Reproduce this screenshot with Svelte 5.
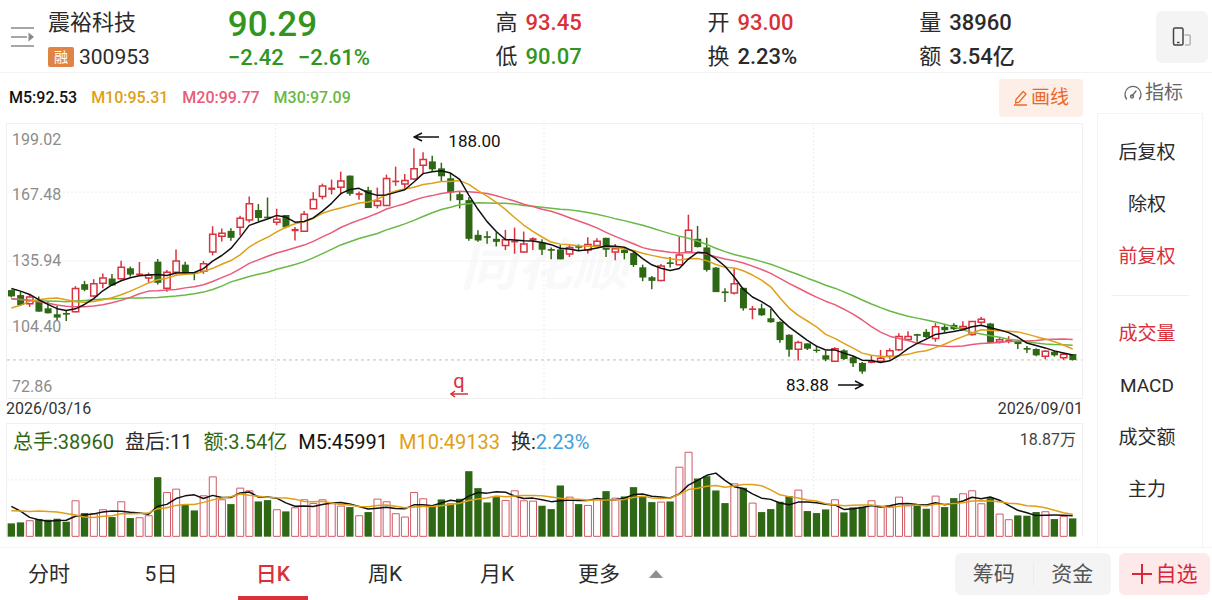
<svelte:options runes />
<script lang="ts">
  type Dir = 'g' | 'r';
  type Candle = [Dir, number, number, number, number];

  const quotes = [
    [{ label: '高', value: '93.45', tone: 'up' }, { label: '低', value: '90.07', tone: 'down' }],
    [{ label: '开', value: '93.00', tone: 'up' }, { label: '换', value: '2.23%', tone: '' }],
    [{ label: '量', value: '38960', tone: '' }, { label: '额', value: '3.54亿', tone: '' }],
  ];
  const averages = [
    { text: 'M5:92.53', cls: 'm5' },
    { text: 'M10:95.31', cls: 'm10' },
    { text: 'M20:99.77', cls: 'm20' },
    { text: 'M30:97.09', cls: 'm30' },
  ];
  const adjustModes = ['后复权', '除权', '前复权'];
  const indicators = ['成交量', 'MACD', '成交额', '主力'];
  const periods = ['分时', '5日', '日K', '周K', '月K'];

  let adjust = $state('前复权');
  let indicator = $state('成交量');
  let period = $state('日K');

  // direction, high, body top, body bottom, low; larger is lower on the plot
  const candles: Candle[] = [
    ['g', 508, 510, 527, 531], ['g', 514, 525, 553, 556], ['r', 522, 530, 550, 560], ['g', 528, 546, 573, 574],
    ['g', 543, 565, 578, 580], ['g', 556, 583, 591, 602], ['g', 570, 579, 582, 602], ['r', 497, 504, 574, 576],
    ['g', 481, 492, 507, 512], ['r', 476, 490, 527, 529], ['r', 459, 472, 488, 503], ['g', 460, 475, 494, 496],
    ['r', 420, 440, 475, 477], ['g', 438, 444, 461, 468], ['r', 424, 460, 463, 464], ['r', 456, 463, 472, 486],
    ['g', 415, 424, 486, 492], ['r', 448, 455, 503, 514], ['r', 386, 421, 455, 462], ['g', 423, 433, 457, 458],
    ['g', 455, 457, 459, 479], ['r', 421, 429, 452, 460], ['r', 316, 340, 394, 404], ['r', 323, 337, 346, 362],
    ['g', 322, 331, 350, 360], ['r', 284, 292, 319, 344], ['r', 226, 248, 297, 305], ['g', 249, 268, 290, 302],
    ['g', 229, 288, 291, 292], ['r', 263, 295, 304, 313], ['g', 283, 283, 318, 322], ['r', 318, 325, 330, 359],
    ['r', 270, 280, 331, 333], ['r', 213, 235, 263, 264], ['r', 187, 194, 226, 235], ['r', 175, 200, 205, 220],
    ['r', 151, 179, 198, 220], ['g', 163, 164, 217, 224], ['r', 211, 217, 221, 236], ['g', 197, 208, 260, 261],
    ['r', 199, 240, 253, 262], ['r', 160, 172, 253, 255], ['r', 136, 179, 182, 194], ['r', 158, 178, 188, 205],
    ['r', 80, 142, 173, 175], ['r', 92, 114, 132, 156], ['g', 103, 121, 143, 152], ['g', 124, 142, 164, 182],
    ['g', 155, 172, 213, 239], ['g', 212, 220, 236, 262], ['g', 228, 238, 353, 360], ['g', 328, 343, 358, 363],
    ['g', 331, 347, 350, 369], ['g', 334, 355, 362, 377], ['r', 327, 357, 374, 388], ['r', 320, 360, 364, 399],
    ['r', 332, 370, 394, 395], ['r', 349, 353, 358, 388], ['g', 355, 366, 386, 403], ['g', 380, 386, 389, 416],
    ['g', 372, 387, 415, 416], ['r', 373, 380, 400, 409], ['g', 371, 377, 380, 388], ['r', 349, 371, 388, 398],
    ['r', 352, 361, 374, 376], ['g', 351, 352, 386, 409], ['r', 370, 384, 394, 419], ['g', 380, 388, 396, 416],
    ['g', 390, 398, 432, 439], ['g', 432, 441, 470, 482], ['g', 466, 471, 480, 506], ['r', 430, 436, 480, 482],
    ['g', 409, 426, 429, 441], ['r', 346, 403, 432, 434], ['r', 281, 328, 394, 395], ['g', 315, 355, 378, 380],
    ['g', 351, 381, 447, 453], ['g', 439, 442, 514, 515], ['g', 503, 514, 517, 545], ['r', 443, 490, 518, 522],
    ['g', 502, 503, 563, 571], ['r', 557, 565, 568, 597], ['g', 550, 565, 584, 587], ['g', 566, 595, 605, 608],
    ['g', 603, 606, 659, 668], ['g', 642, 645, 688, 710], ['r', 662, 667, 688, 722], ['g', 670, 671, 685, 690],
    ['g', 677, 690, 692, 698], ['g', 693, 707, 718, 724], ['r', 682, 686, 724, 726], ['g', 688, 692, 716, 720],
    ['g', 708, 713, 729, 741], ['g', 726, 730, 754, 762], ['r', 705, 723, 728, 730], ['r', 690, 715, 724, 728],
    ['r', 685, 692, 709, 718], ['r', 639, 649, 689, 693], ['r', 633, 649, 658, 662], ['g', 641, 643, 646, 665],
    ['g', 627, 636, 650, 655], ['r', 609, 620, 655, 665], ['g', 611, 621, 629, 637], ['g', 609, 615, 626, 630],
    ['r', 603, 619, 625, 630], ['r', 602, 604, 643, 647], ['r', 590, 597, 606, 613], ['g', 608, 611, 667, 668],
    ['r', 652, 659, 666, 670], ['r', 648, 660, 663, 670], ['g', 661, 664, 671, 687], ['g', 678, 685, 688, 699],
    ['g', 685, 688, 705, 709], ['r', 691, 694, 709, 718], ['g', 692, 696, 705, 710], ['r', 699, 703, 713, 720],
    ['g', 702, 703, 719, 722],
  ];

  // top edge of each volume bar
  const volumes = [
    310, 307, 301, 297, 299, 296, 305, 241, 279, 281, 268, 291, 244, 294, 292, 286, 171, 216, 206, 252,
    271, 226, 169, 238, 252, 203, 211, 244, 240, 268, 274, 262, 238, 249, 238, 250, 257, 261, 286, 276,
    236, 244, 280, 290, 216, 235, 258, 238, 250, 236, 153, 204, 247, 231, 240, 211, 241, 242, 257, 267,
    196, 230, 252, 255, 236, 213, 233, 229, 201, 228, 246, 245, 244, 140, 95, 175, 168, 211, 249, 190,
    203, 248, 276, 267, 245, 228, 209, 273, 279, 268, 238, 277, 262, 260, 241, 259, 259, 230, 256, 256,
    266, 227, 261, 234, 220, 211, 250, 234, 281, 298, 286, 287, 276, 274, 297, 288, 295,
  ];

  const closes = candles.map(([dir, , top, bottom]) => (dir === 'r' ? top : bottom));
  const cx = (i: number) => 13 + i * 27.5;

  // lead holds the averages whose window starts before the first bar shown
  function average(values: number[], n: number, lead: number[]) {
    return values
      .map((_, i) => {
        const y = i < n - 1 ? lead[i] : values.slice(i - n + 1, i + 1).reduce((a, b) => a + b, 0) / n;
        return `${cx(i)},${y.toFixed(1)}`;
      })
      .join(' ');
  }

  const priceLines = [
    { cls: 'm30', points: average(closes, 30, [535, 537, 539, 541, 542, 543, 544, 542, 540, 538, 536, 535, 534, 533, 533, 532, 531, 529, 527, 524, 520, 515, 507, 497, 484, 476, 468, 461, 455]) },
    { cls: 'm20', points: average(closes, 20, [535, 537, 540, 544, 549, 554, 558, 559, 559, 557, 553, 547, 540, 531, 520, 512, 511, 509, 507]) },
    { cls: 'm10', points: average(closes, 10, [563, 555, 543, 538, 534, 533, 538, 544, 546]) },
    { cls: 'm5', points: average(closes, 5, [504, 512, 522, 538]) },
  ];
  const volumeLines = [
    { cls: 'm5', points: average(volumes, 5, [258, 272, 291, 298]) },
    { cls: 'm10', points: average(volumes, 10, [271, 272, 273, 272, 273, 275, 279, 284, 290]) },
  ];

  const axis = [
    { text: '199.02', top: 6 },
    { text: '167.48', top: 26 },
    { text: '135.94', top: 50 },
    { text: '104.40', top: 74 },
    { text: '72.86', top: 96 },
  ];
</script>

<div class="app">
  <header class="quote">
    <button class="menu" aria-label="自选列表">
      <svg viewBox="0 0 24 20" width="24" height="20" fill="none" stroke="#8a8a8a" stroke-width="1.5" aria-hidden="true">
        <path d="M0 1h23M0 10h16M0 19h23" />
        <path d="M17.5 5.5v9l5.5-4.5z" fill="#8a8a8a" stroke="none" />
      </svg>
    </button>
    <div class="stock">
      <h1>震裕科技</h1>
      <div class="code"><span class="tag">融</span>300953</div>
    </div>
    <div class="price down">
      <strong>90.29</strong>
      <div class="change"><span>−2.42</span><span>−2.61%</span></div>
    </div>
    {#each quotes as pair}
      <dl>
        {#each pair as q}
          <div><dt>{q.label}</dt><dd class={q.tone}>{q.value}</dd></div>
        {/each}
      </dl>
    {/each}
    <button class="rotate" aria-label="切换竖屏">
      <svg viewBox="0 0 20 20" width="20" height="20" fill="none" stroke-width="1.5" aria-hidden="true">
        <path d="M12.5 8h4.500q1.200 0 1.200 1.200v7.600q0 1.200-1.200 1.200h-4" stroke="#b5b5b5" />
        <rect x="1.5" y="1" width="9.5" height="17" rx="1.5" stroke="#444" />
        <path d="M5 15.5h2.5" stroke="#444" />
      </svg>
    </button>
  </header>

  <main>
    <section class="charts">
      <div class="averages">
        {#each averages as a}
          <span class={a.cls}>{a.text}</span>
        {/each}
        <button class="draw">
          <svg viewBox="0 0 16 16" width="16" height="16" fill="none" stroke="currentColor" stroke-width="1.3" stroke-linejoin="round" aria-hidden="true">
            <path d="M3 9.5 10.2 1.5 13 4 6 12.2 2.5 13zM1 15h13" />
          </svg>
          画线
        </button>
      </div>

      <div class="plot">
        <span class="watermark" aria-hidden="true">同花顺</span>
        <svg class="canvas" viewBox="0 7 3231 828" preserveAspectRatio="none" aria-label="日K线图">
          <path class="grid" d="M0 421H3231M0 629H3231" />
          <path class="grid dotted" d="M0 213H3231M807 7V835M1614 7V835M2424 7V835" />
          <path class="last" d="M0 720H3231" />
          {#each candles as [dir, high, top, bottom, low], i}
            <line class={dir} x1={cx(i)} x2={cx(i)} y1={high} y2={low} />
            {#if dir === 'r' && bottom - top > 5}
              <rect class="r" x={cx(i) - 9} y={top} width="19" height={bottom - top} />
            {:else}
              <rect class="solid {dir}" x={cx(i) - 10} y={top - 1} width="21" height={bottom - top + 2} />
            {/if}
          {/each}
          {#each priceLines as line}
            <polyline class={line.cls} points={line.points} />
          {/each}
        </svg>
        {#each axis as a}
          <span class="axis" style="top: {a.top}%">{a.text}</span>
        {/each}
        <span class="peak">
          <svg viewBox="0 0 26 12" width="26" height="12" aria-hidden="true"><path d="M9 2 1 6l8 4M1 6h25" /></svg>
          188.00
        </span>
        <span class="trough">
          83.88
          <svg viewBox="0 0 26 12" width="26" height="12" aria-hidden="true"><path d="m17 2 8 4-8 4M25 6H0" /></svg>
        </span>
        <span class="event">
          q
          <svg viewBox="0 0 18 8" width="18" height="8" aria-hidden="true"><path d="M5 1 1 4l4 3M1 4h17" /></svg>
        </span>
      </div>

      <div class="dates"><time>2026/03/16</time><time>2026/09/01</time></div>

      <div class="volume">
        <svg class="canvas" viewBox="0 10 3231 340" preserveAspectRatio="none" aria-label="成交量图">
          <path class="grid dotted" d="M0 178H3231M807 10V350M1614 10V350M2424 10V350" />
          {#each volumes as top, i}
            {#if candles[i][0] === 'r'}
              <rect class="r thin" x={cx(i) - 10} y={top} width="21" height={348 - top} />
            {:else}
              <rect class="solid g" x={cx(i) - 11} y={top - 1} width="22" height={350 - top} />
            {/if}
          {/each}
          {#each volumeLines as line}
            <polyline class={line.cls} points={line.points} />
          {/each}
        </svg>
        <div class="legend">
          <span class="dark-green">总手:38960</span>
          <span>盘后:11</span>
          <span class="dark-green">额:3.54亿</span>
          <span class="m5">M5:45991</span>
          <span class="m10">M10:49133</span>
          <span>换:<span class="blue">2.23%</span></span>
          <span class="max">18.87万</span>
        </div>
      </div>
    </section>

    <aside>
      <button class="gauge">
        <svg viewBox="0 0 20 16" width="20" height="16" fill="none" stroke="currentColor" stroke-width="1.3" stroke-linecap="round" aria-hidden="true">
          <path d="M3.5 14A8 8 0 1 1 16.5 14M9 11l4-5" />
          <circle cx="9" cy="11.5" r="1.500" />
        </svg>
        指标
      </button>
      <div class="options">
        {#each adjustModes as mode}
          <button class:active={adjust === mode} aria-pressed={adjust === mode} onclick={() => (adjust = mode)}>{mode}</button>
        {/each}
        <hr />
        {#each indicators as name}
          <button class:active={indicator === name} aria-pressed={indicator === name} onclick={() => (indicator = name)}>{name}</button>
        {/each}
      </div>
    </aside>
  </main>

  <footer>
    <nav>
      {#each periods as p}
        <button class:active={period === p} aria-pressed={period === p} onclick={() => (period = p)}>{p}</button>
      {/each}
      <button class="more">
        更多
        <svg viewBox="0 0 14 8" width="14" height="8" aria-hidden="true"><path d="M0 8 7 0l7 8z" fill="#8f8f8f" /></svg>
      </button>
    </nav>
    <div class="group">
      <button>筹码</button>
      <button>资金</button>
    </div>
    <button class="add">
      <svg viewBox="0 0 20 20" width="20" height="20" stroke="currentColor" stroke-width="2" aria-hidden="true"><path d="M10 0v20M0 10h20" /></svg>
      自选
    </button>
  </footer>
</div>

<style>
  :global(body) {
    background: #fff;
  }
  .app {
    display: flex;
    flex-direction: column;
    min-height: 100vh;
    color: #2b2b2b;
    font-family: Roboto, 'Noto Sans CJK SC', sans-serif;
    font-size: 20px;
    line-height: 24px;
  }
  button {
    padding: 0;
    border: none;
    background: none;
    color: inherit;
    font: inherit;
    white-space: nowrap;
    cursor: pointer;
  }
  h1,
  dl,
  dd {
    margin: 0;
    font-weight: 400;
  }
  svg {
    flex-shrink: 0;
  }
  .up {
    color: #d9303a;
  }
  .down {
    color: #32961e;
  }

  .quote {
    display: grid;
    grid-template-columns: 48px 180fr 268fr 212fr 212fr 237fr 52px;
    align-items: center;
    height: 72px;
    padding-right: 4px;
    border-bottom: 1px solid #f3f3f3;
  }
  .menu {
    display: flex;
    padding-left: 11px;
  }
  .stock,
  dl {
    display: flex;
    flex-direction: column;
    gap: 10px;
    padding-top: 5px;
  }
  h1 {
    font-size: 22px;
    line-height: 24px;
  }
  .code {
    display: flex;
    align-items: center;
    gap: 5px;
    font-size: 21px;
  }
  .tag {
    width: 26px;
    border-radius: 2px;
    background: #e08443;
    color: #fff;
    font-size: 14px;
    line-height: 20px;
    text-align: center;
  }
  .price {
    padding-top: 8px;
  }
  .price strong {
    display: block;
    font-size: 35px;
    font-weight: 500;
    line-height: 34px;
  }
  .change {
    display: flex;
    gap: 14px;
    font-size: 22px;
    font-weight: 500;
    line-height: 32px;
  }
  dl div {
    display: flex;
    gap: 8px;
    font-size: 22px;
  }
  dd {
    font-weight: 500;
  }
  .rotate {
    display: grid;
    place-items: center;
    height: 52px;
    border-radius: 6px;
    background: #f4f4f4;
  }

  main {
    display: flex;
    flex: 1;
  }
  .charts {
    display: flex;
    flex: 1;
    flex-direction: column;
    min-width: 0;
    padding: 0 14px 10px 6px;
  }
  .averages {
    display: flex;
    align-items: center;
    gap: 14px;
    height: 50px;
    padding-left: 3px;
    font-size: 16px;
    font-weight: 500;
  }
  .draw {
    display: flex;
    align-items: center;
    justify-content: center;
    gap: 2px;
    width: 84px;
    height: 38px;
    margin-left: auto;
    border-radius: 4px;
    background: #fdeee7;
    color: #e8692a;
    font-size: 19px;
    font-weight: 400;
  }
  .m5 {
    color: #111;
    stroke: #111;
  }
  .m10 {
    color: #dfa016;
    stroke: #dfa016;
  }
  .m20 {
    color: #e95b78;
    stroke: #e95b78;
  }
  .m30 {
    color: #68b945;
    stroke: #68b945;
  }

  .plot,
  .volume {
    position: relative;
    box-sizing: border-box;
    border: 1px solid #f0f0f0;
  }
  .plot {
    flex: 1;
    min-height: 240px;
  }
  .canvas {
    position: absolute;
    inset: 0;
    width: 100%;
    height: 100%;
  }
  .canvas * {
    vector-effect: non-scaling-stroke;
  }
  .grid {
    stroke: #f3f3f3;
  }
  .dotted {
    stroke: #ededed;
    stroke-dasharray: 2 2;
  }
  .last {
    stroke: #c9bd98;
    stroke-dasharray: 3 3;
  }
  polyline {
    fill: none;
    stroke-width: 1.5;
    stroke-linejoin: round;
  }
  line {
    stroke-width: 1.5;
  }
  .g {
    fill: #2f6815;
    stroke: #2f6815;
  }
  .r {
    fill: #fff;
    stroke: #d8333f;
    stroke-width: 1.5;
  }
  .thin {
    stroke: #cf5a66;
    stroke-width: 1;
  }
  .solid {
    stroke: none;
  }
  .solid.r {
    fill: #d8333f;
  }
  .watermark {
    position: absolute;
    top: 52%;
    left: 50%;
    transform: translate(-50%, -50%);
    color: #f9f9f9;
    font-size: 56px;
    font-style: italic;
    font-weight: 700;
    line-height: 56px;
  }
  .axis {
    position: absolute;
    left: 5px;
    transform: translateY(-50%);
    color: #8c8c8c;
    font-size: 16px;
  }
  .peak,
  .trough,
  .event {
    position: absolute;
    display: flex;
    align-items: center;
    color: #111;
    font-size: 17px;
  }
  .peak svg,
  .trough svg,
  .event svg {
    fill: none;
    stroke: currentColor;
    stroke-width: 1.5;
  }
  .peak {
    top: 2%;
    left: 37.8%;
    gap: 9px;
  }
  .peak svg {
    margin-bottom: 8px;
  }
  .trough {
    top: 91%;
    right: 20.3%;
    gap: 9px;
  }
  .event {
    bottom: 0;
    left: 41.2%;
    flex-direction: column;
    color: #d9303a;
    font-size: 20px;
    line-height: 18px;
  }
  .dates {
    display: flex;
    justify-content: space-between;
    height: 24px;
    color: #333;
    font-size: 16px;
    line-height: 20px;
  }
  .volume {
    height: 114px;
    border-bottom: none;
  }
  .legend {
    position: relative;
    display: flex;
    gap: 11px;
    padding: 6px 6px 0;
    white-space: nowrap;
  }
  .legend span {
    stroke: none;
  }
  .legend .max {
    margin-left: auto;
    color: #444;
    font-size: 16px;
    line-height: 20px;
  }
  .dark-green {
    color: #2f6815;
  }
  .blue {
    color: #42a0dc;
  }

  aside {
    display: flex;
    flex-direction: column;
    width: 106px;
    margin-right: 9px;
    font-size: 19px;
  }
  .gauge {
    display: flex;
    align-items: center;
    justify-content: center;
    height: 40px;
    padding-left: 6px;
    gap: 2px;
    color: #666;
  }
  .options {
    display: flex;
    flex: 1;
    flex-direction: column;
    padding-top: 13px;
    border: 1px solid #f3f3f3;
    border-bottom: none;
  }
  .options button {
    height: 52px;
    padding-right: 6px;
  }
  .options hr {
    width: 78px;
    margin: 12px auto;
    border: none;
    border-top: 1px solid #f0f0f0;
  }
  .active {
    color: #d9303a;
  }

  footer {
    display: flex;
    align-items: center;
    height: 52px;
    padding-right: 2px;
    border-top: 1px solid #f3f3f3;
    font-size: 21px;
  }
  nav {
    display: flex;
    flex: 1;
    align-self: stretch;
    gap: 42px;
    padding-left: 14px;
  }
  nav button {
    min-width: 70px;
    padding-top: 4px;
    border-bottom: 4px solid transparent;
  }
  nav .active {
    border-color: #d9303a;
    font-weight: 500;
  }
  nav .more {
    display: flex;
    align-items: center;
    gap: 29px;
    padding-left: 4px;
  }
  .group {
    display: flex;
    align-items: center;
    width: 156px;
    height: 42px;
    margin-right: 8px;
    border-radius: 6px;
    background: #f4f4f4;
    color: #555;
  }
  .group button {
    flex: 1;
  }
  .group button + button {
    border-left: 1px solid #ececec;
  }
  .add {
    display: flex;
    align-items: center;
    justify-content: center;
    gap: 4px;
    width: 91px;
    height: 42px;
    border-radius: 6px;
    background: #fde8ea;
    color: #d9263a;
  }
</style>
